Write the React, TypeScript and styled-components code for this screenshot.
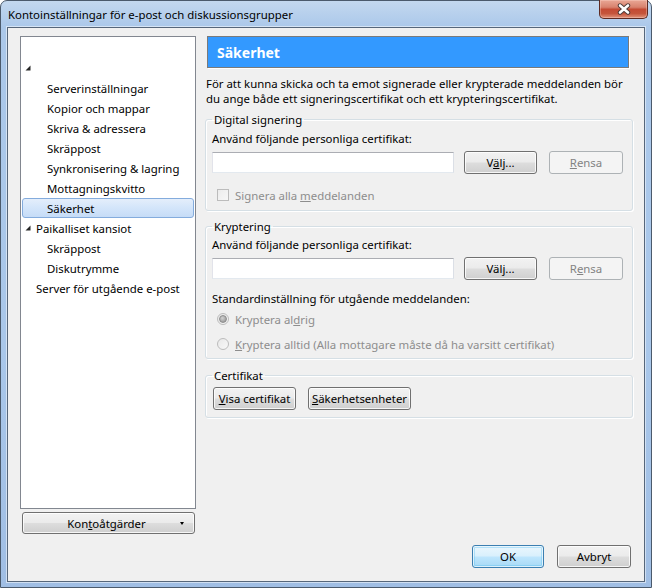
import React from 'react';
import styled, { createGlobalStyle, css } from 'styled-components';

const GlobalStyle = createGlobalStyle`
  html, body { margin: 0; padding: 0; background: #ffffff; }
  body {
    font-family: "Noto Sans", "DejaVu Sans", sans-serif;
    font-size: 11.4px;
    color: #000000;
  }
  * { box-sizing: border-box; }
`;

const Window = styled.div`
  width: 652px;
  height: 588px;
  display: flex;
  flex-direction: column;
  padding: 0 6px 5px 6px;
  border: 1px solid #4b5a6c;
  border-radius: 7px 7px 0 0;
  background: linear-gradient(180deg, #c3d8ef 0px, #abc8ea 26px, #a9c7ea 60%, #a0bee4 100%);
`;

const TitleBar = styled.div`
  height: 26px;
  display: flex;
  align-items: flex-start;
`;

const TitleText = styled.div`
  line-height: 16px;
  margin: 6px 0 0 1px;
  color: #000;
`;

const CloseButton = styled.div`
  margin-left: auto;
  margin-top: -1px;
  margin-right: -3px;
  width: 49px;
  height: 19px;
  border: 1px solid #5e2a22;
  border-top: none;
  border-radius: 0 0 5px 5px;
  background: linear-gradient(180deg, #e9a795 0%, #d8826e 40%, #c44b34 52%, #c5553b 75%, #e1937a 100%);
  box-shadow: inset 0 0 0 1px rgba(255, 220, 210, 0.35);
  display: flex;
  align-items: center;
  justify-content: center;
`;

const Client = styled.div`
  flex: 1;
  display: flex;
  flex-direction: column;
  min-height: 0;
  background: #f0f0f0;
  border: 1px solid #56667a;
  box-shadow: 0 0 0 1px rgba(255, 255, 255, 0.5);
  padding: 8px 11px 13px 12px;
`;

const Body = styled.div`
  flex: 1;
  display: flex;
  gap: 10px;
  min-height: 0;
`;

const LeftColumn = styled.div`
  width: 176px;
  display: flex;
  flex-direction: column;
`;

const Tree = styled.div`
  flex: 1;
  background: #ffffff;
  border: 1px solid #828790;
  padding-top: 21px;
`;

const Row = styled.div<{ $level: number; $selected?: boolean }>`
  height: 20px;
  margin: 0 1px;
  display: flex;
  align-items: center;
  border: 1px solid transparent;
  border-radius: 3px;
  padding-left: ${p => 2 + p.$level * 11}px;
  white-space: nowrap;
  ${p => p.$selected && css`
    border-color: #84acdd;
    background: linear-gradient(180deg, #e4eefb 0%, #d3e5fa 50%, #c6dcf7 100%);
  `}
`;

const Expander = styled.span`
  width: 11px;
  height: 18px;
  flex: none;
  display: flex;
  align-items: center;
`;

const ButtonBase = styled.button<{ $w?: number; $default?: boolean }>`
  font: inherit;
  color: #000;
  height: 23px;
  width: ${p => (p.$w ? `${p.$w}px` : 'auto')};
  padding: 0;
  border: 1px solid #707070;
  border-radius: 3px;
  background: linear-gradient(180deg, #f2f2f2 0%, #ebebeb 48%, #dddddd 52%, #cfcfcf 100%);
  box-shadow: inset 0 0 0 1px rgba(255, 255, 255, 0.8);
  ${p => p.$default && css`
    border-color: #3c7fb1;
    background: linear-gradient(180deg, #eaf6fd 0%, #d9f0fc 48%, #bee6fd 52%, #a7d9f5 100%);
    box-shadow: inset 0 0 0 1px rgba(255, 255, 255, 0.7), inset 0 0 0 2px rgba(80, 190, 240, 0.35);
  `}
  &:disabled {
    color: #838383;
    border-color: #adb2b5;
    background: #f4f4f4;
    box-shadow: none;
  }
`;

const AccountButton = styled(ButtonBase)`
  margin: 3px 1px 0 2px;
  height: 22px;
  display: flex;
  align-items: center;
`;

const AccountLabel = styled.span`
  flex: 1;
  text-align: center;
  padding-left: 10px;
`;

const DropArrow = styled.span`
  width: 0;
  height: 0;
  margin-right: 10px;
  border-top: 3px solid #000;
  border-left: 2.5px solid transparent;
  border-right: 2.5px solid transparent;
`;

const RightColumn = styled.div`
  flex: 1;
  display: flex;
  flex-direction: column;
`;

const Header = styled.div`
  height: 32px;
  margin: 0 4px 0 1px;
  background: #3399ff;
  border: 1px solid #7a7a7a;
  box-shadow: 1px 1px 0 #ffffff;
  color: #ffffff;
  font-weight: bold;
  font-size: 14px;
  display: flex;
  align-items: center;
  padding-left: 9px;
`;

const Intro = styled.p`
  margin: 8px 0 0 0;
  line-height: 15px;
`;

const Group = styled.fieldset<{ $top: number; $bottom: number }>`
  margin: ${p => p.$top}px 0 0 -1px;
  padding: 0 6px ${p => p.$bottom}px 6px;
  border: 1px solid #d5dfe5;
  border-radius: 3px;
  box-shadow: inset 1px 1px 0 #ffffff, 1px 1px 0 #ffffff;
  min-width: 0;
`;

const Legend = styled.legend`
  padding: 0 2px;
  line-height: 15px;
`;

const FieldLabel = styled.div<{ $top: number }>`
  margin-top: ${p => p.$top}px;
  line-height: 15px;
`;

const CertRow = styled.div`
  margin-top: 4px;
  height: 24px;
  display: flex;
  align-items: center;
`;

const TextField = styled.input`
  width: 242px;
  height: 21px;
  border: 1px solid;
  border-color: #abadb3 #dbdfe6 #e3e9ef #e2e3ea;
  background: #ffffff;
  margin: 0 10px 0 0;
  padding: 0 3px;
  font: inherit;
`;

const Spacer = styled.span<{ $w: number }>`
  width: ${p => p.$w}px;
  flex: none;
`;

const OptionRow = styled.div<{ $top: number }>`
  margin-top: ${p => p.$top}px;
  height: 18px;
  display: flex;
  align-items: center;
  gap: 6px;
  padding-left: 5px;
  color: #8d8d8d;
`;

const CheckBox = styled.span`
  width: 12px;
  height: 12px;
  border: 1px solid #bcbcbc;
  background: linear-gradient(135deg, #ececec 0%, #f7f7f7 100%);
  flex: none;
`;

const Radio = styled.span<{ $checked?: boolean }>`
  width: 12px;
  height: 12px;
  border-radius: 50%;
  border: 1px solid #bcbcbc;
  background: linear-gradient(135deg, #e8e8e8 0%, #f8f8f8 100%);
  flex: none;
  display: flex;
  align-items: center;
  justify-content: center;
  &::after {
    content: '';
    display: ${p => (p.$checked ? 'block' : 'none')};
    width: 6px;
    height: 6px;
    border-radius: 50%;
    background: radial-gradient(circle at 40% 35%, #d2d2d2 0%, #9a9a9a 80%);
    border: 1px solid #8c8c8c;
  }
`;

const ButtonRow = styled.div`
  margin-top: 4px;
  display: flex;
  gap: 12px;
  padding-left: 1px;
`;

const Footer = styled.div`
  margin-top: 11px;
  margin-right: 2px;
  display: flex;
  justify-content: flex-end;
  gap: 13px;
`;

const Key = styled.span`
  text-decoration: underline;
`;

const ExpandedGlyph = () => (
  <svg width="6" height="6" viewBox="0 0 6 6">
    <polygon points="5.5,0.5 5.5,5.5 0.5,5.5" fill="#262626" />
  </svg>
);

const CloseGlyph = () => (
  <svg width="14" height="12" viewBox="0 0 14 12">
    <path d="M3 2.5 L11 9.5 M11 2.5 L3 9.5" stroke="#4a3a38" strokeWidth="4.4" strokeLinecap="round" />
    <path d="M3 2.5 L11 9.5 M11 2.5 L3 9.5" stroke="#ffffff" strokeWidth="2.6" strokeLinecap="round" />
  </svg>
);

type Node = { label: string; level: number; expanded?: boolean; selected?: boolean };

const nodes: Node[] = [
  { label: '', level: 0, expanded: true },
  { label: 'Serverinställningar', level: 1 },
  { label: 'Kopior och mappar', level: 1 },
  { label: 'Skriva & adressera', level: 1 },
  { label: 'Skräppost', level: 1 },
  { label: 'Synkronisering & lagring', level: 1 },
  { label: 'Mottagningskvitto', level: 1 },
  { label: 'Säkerhet', level: 1, selected: true },
  { label: 'Paikalliset kansiot', level: 0, expanded: true },
  { label: 'Skräppost', level: 1 },
  { label: 'Diskutrymme', level: 1 },
  { label: 'Server för utgående e-post', level: 0 },
];

export default function App() {
  return (
    <>
      <GlobalStyle />
      <Window>
        <TitleBar>
          <TitleText>Kontoinställningar för e-post och diskussionsgrupper</TitleText>
          <CloseButton>
            <CloseGlyph />
          </CloseButton>
        </TitleBar>
        <Client>
          <Body>
            <LeftColumn>
              <Tree>
                {nodes.map((n, i) => (
                  <Row key={i} $level={n.level} $selected={n.selected}>
                    <Expander>{n.expanded && <ExpandedGlyph />}</Expander>
                    {n.label}
                  </Row>
                ))}
              </Tree>
              <AccountButton>
                <AccountLabel>Kon<Key>t</Key>oåtgärder</AccountLabel>
                <DropArrow />
              </AccountButton>
            </LeftColumn>
            <RightColumn>
              <Header>Säkerhet</Header>
              <Intro>
                För att kunna skicka och ta emot signerade eller krypterade meddelanden bör du ange både ett signeringscertifikat och ett krypteringscertifikat.
              </Intro>

              <Group $top={6} $bottom={6}>
                <Legend>Digital signering</Legend>
                <FieldLabel $top={4}>Använd följande personliga certifikat:</FieldLabel>
                <CertRow>
                  <TextField readOnly />
                  <ButtonBase $w={73}>V<Key>ä</Key>lj...</ButtonBase>
                  <Spacer $w={12} />
                  <ButtonBase $w={74} disabled><Key>R</Key>ensa</ButtonBase>
                </CertRow>
                <OptionRow $top={12}>
                  <CheckBox />
                  <span>Signera alla <Key>m</Key>eddelanden</span>
                </OptionRow>
              </Group>

              <Group $top={8} $bottom={5}>
                <Legend>Kryptering</Legend>
                <FieldLabel $top={3}>Använd följande personliga certifikat:</FieldLabel>
                <CertRow>
                  <TextField readOnly />
                  <ButtonBase $w={73}>Väl<Key>j</Key>...</ButtonBase>
                  <Spacer $w={12} />
                  <ButtonBase $w={74} disabled>R<Key>e</Key>nsa</ButtonBase>
                </CertRow>
                <FieldLabel $top={11}>Standardinställning för utgående meddelanden:</FieldLabel>
                <OptionRow $top={4}>
                  <Radio $checked />
                  <span>Kryptera al<Key>d</Key>rig</span>
                </OptionRow>
                <OptionRow $top={7}>
                  <Radio />
                  <span><Key>K</Key>ryptera alltid (Alla mottagare måste då ha varsitt certifikat)</span>
                </OptionRow>
              </Group>

              <Group $top={9} $bottom={7}>
                <Legend>Certifikat</Legend>
                <ButtonRow>
                  <ButtonBase $w={83}><Key>V</Key>isa certifikat</ButtonBase>
                  <ButtonBase $w={103}><Key>S</Key>äkerhetsenheter</ButtonBase>
                </ButtonRow>
              </Group>
            </RightColumn>
          </Body>
          <Footer>
            <ButtonBase $w={72} $default>OK</ButtonBase>
            <ButtonBase $w={74}>Avbryt</ButtonBase>
          </Footer>
        </Client>
      </Window>
    </>
  );
}
